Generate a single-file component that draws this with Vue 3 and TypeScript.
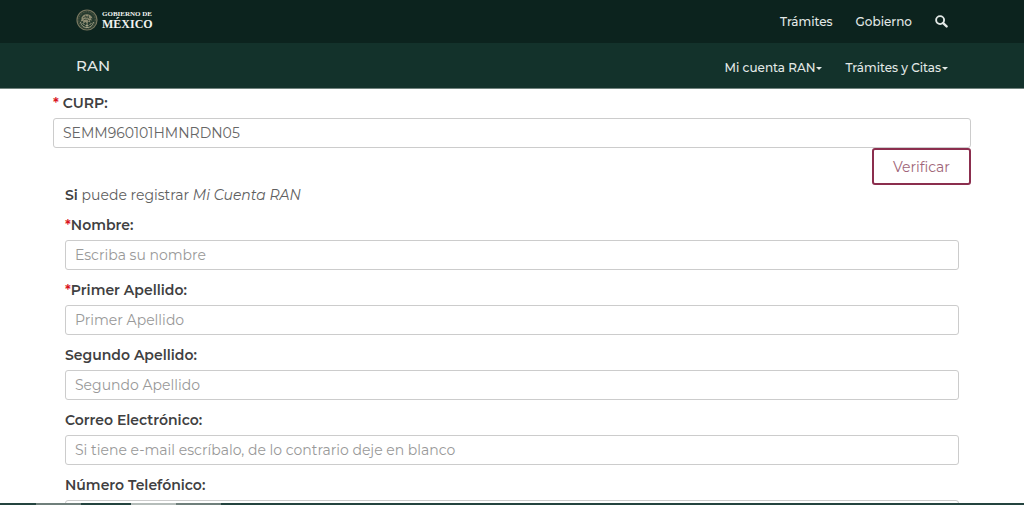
<script setup lang="ts">
import { ref } from 'vue'

interface Field {
  id: string
  label: string
  placeholder: string
  required: boolean
  type: string
}

const curp = ref('SEMM960101HMNRDN05')

const fields: Field[] = [
  { id: 'nombre', label: 'Nombre:', placeholder: 'Escriba su nombre', required: true, type: 'text' },
  { id: 'primer-apellido', label: 'Primer Apellido:', placeholder: 'Primer Apellido', required: true, type: 'text' },
  { id: 'segundo-apellido', label: 'Segundo Apellido:', placeholder: 'Segundo Apellido', required: false, type: 'text' },
  { id: 'correo', label: 'Correo Electrónico:', placeholder: 'Si tiene e-mail escríbalo, de lo contrario deje en blanco', required: false, type: 'email' },
  { id: 'telefono', label: 'Número Telefónico:', placeholder: '', required: false, type: 'tel' },
]

const menus: string[] = ['Mi cuenta RAN', 'Trámites y Citas']
</script>

<template>
  <div class="page">
    <header class="gov-bar">
      <div class="bar-inner">
        <a class="brand" href="#">
          <svg class="seal" viewBox="0 0 44 44" aria-hidden="true">
            <circle cx="22" cy="22" r="20" fill="#263a2e" stroke="#77765f" stroke-width="2.4" />
            <circle cx="22" cy="22" r="16.5" fill="none" stroke="#5f634e" stroke-width="2" stroke-dasharray="2 1.6" />
            <path d="M11 17c3-6 9-8 14-6 4 1 7 4 8 8l-4-1 3 5-5-1 2 5-5-2-1 5-4-4-4 3-1-5-5 1 2-4z" fill="#8c8b71" />
            <path d="M14 18c5-4 10-3 13 1M15 22c4-3 8-2 11 2M19 13l2 5M25 13l-1 6" fill="none" stroke="#24372b" stroke-width="1.5" />
            <path d="M9 26c2 8 7 11 13 11s11-3 13-11M13 29l4 2M31 29l-4 2M19 33h6M22 29v8" fill="none" stroke="#a3a287" stroke-width="2" />
          </svg>
          <span class="brand-text">
            <span class="brand-small">GOBIERNO DE</span>
            <span class="brand-large">MÉXICO</span>
          </span>
        </a>
        <nav class="gov-links" aria-label="Gobierno">
          <a href="#">Trámites</a>
          <a href="#">Gobierno</a>
          <button class="search" type="button" aria-label="Buscar">
            <svg viewBox="0 0 14 14" aria-hidden="true">
              <circle cx="5.5" cy="5.5" r="4.3" fill="none" stroke="currentColor" stroke-width="2" />
              <path d="M8.8 8.8l3.7 3.5" stroke="currentColor" stroke-width="2.5" stroke-linecap="round" />
            </svg>
          </button>
        </nav>
      </div>
    </header>

    <div class="site-bar">
      <div class="bar-inner">
        <a class="site-name" href="#">RAN</a>
        <nav class="site-links" aria-label="RAN">
          <button v-for="menu in menus" :key="menu" class="menu" type="button">
            {{ menu }}<span class="caret"></span>
          </button>
        </nav>
      </div>
    </div>

    <main class="content">
      <form class="form" @submit.prevent>
        <div class="curp">
          <label for="curp"><span class="mark">*</span> CURP:</label>
          <input id="curp" v-model="curp" type="text" />
          <button class="verify" type="button">Verificar</button>
        </div>
        <div class="details">
          <p class="message"><strong>Si</strong> puede registrar <em>Mi Cuenta RAN</em></p>
          <div v-for="field in fields" :key="field.id" class="field">
            <label :for="field.id"><span v-if="field.required" class="mark">*</span>{{ field.label }}</label>
            <input :id="field.id" :type="field.type" :placeholder="field.placeholder" />
          </div>
        </div>
      </form>
    </main>

    <div class="strip"><span></span><span class="light"></span><span></span></div>
  </div>
</template>

<style>
body {
  margin: 0;
}
</style>

<style scoped>
.page {
  display: flex;
  flex-direction: column;
  height: 100vh;
  overflow: hidden;
  background: #fff;
  color: #404041;
  font-family: Montserrat, Inter, "Liberation Sans", sans-serif;
  font-size: 14px;
  line-height: 20px;
}

.page * {
  box-sizing: border-box;
}

a {
  color: inherit;
  text-decoration: none;
}

button {
  padding: 0;
  border: 0;
  background: none;
  color: inherit;
  font: inherit;
  cursor: pointer;
}

.gov-bar {
  flex: none;
  height: 43px;
  background: #0c231e;
  color: #e3e9e7;
  font-size: 12px;
  font-weight: 500;
}

.site-bar {
  flex: none;
  height: 46px;
  border-bottom: 1px solid #71837e;
  background: #13322b;
  color: #e3e9e7;
  font-size: 12px;
  font-weight: 500;
}

.bar-inner {
  display: flex;
  align-items: center;
  justify-content: space-between;
  height: 100%;
  padding: 0 76px;
}

.brand {
  display: flex;
  align-items: center;
  gap: 4px;
  margin-top: -4px;
}

.seal {
  width: 22px;
  height: 22px;
}

.brand-text {
  display: flex;
  flex-direction: column;
  color: #f1f3f0;
  font-family: "Liberation Serif", serif;
  font-weight: 700;
}

.brand-small {
  font-size: 7px;
  line-height: 8px;
}

.brand-large {
  font-size: 12px;
  line-height: 12px;
}

.gov-links {
  display: flex;
  align-items: center;
  gap: 23px;
}

.search {
  display: flex;
}

.search svg {
  width: 13px;
  height: 13px;
}

.site-name {
  font-size: 15px;
}

.site-links {
  display: flex;
  gap: 23px;
  padding-top: 4px;
}

.menu {
  display: flex;
  align-items: center;
  gap: 1px;
}

.caret {
  margin-top: 2px;
  border-top: 3px solid currentColor;
  border-right: 3px solid transparent;
  border-left: 3px solid transparent;
}

.content {
  flex: 1;
  min-height: 0;
  overflow: hidden;
  padding: 4px 53px 0;
}

.curp,
.field {
  display: flex;
  flex-direction: column;
}

label {
  margin-bottom: 5px;
  font-weight: 600;
}

.mark {
  color: #d9141e;
}

input {
  width: 100%;
  height: 30px;
  padding: 0 9px;
  border: 1px solid #ccc;
  border-radius: 3px;
  background: #fff;
  color: #666;
  font: inherit;
}

input::placeholder {
  color: #999;
  opacity: 1;
}

.verify {
  align-self: flex-end;
  width: 99px;
  height: 37px;
  border: 2px solid #8b2e4e;
  border-radius: 3px;
  color: #a06578;
}

.details {
  padding: 0 12px;
}

.message {
  margin: 0 0 10px;
  color: #606060;
}

.message strong {
  color: #404041;
  font-weight: 600;
}

.field {
  margin-bottom: 10px;
}

.strip {
  display: flex;
  flex: none;
  height: 2px;
  padding-left: 36px;
  background: #24443f;
}

.strip span {
  width: 45px;
  background: #6f7f7b;
}

.strip .light {
  margin-left: 50px;
  background: #b5bdba;
}
</style>
